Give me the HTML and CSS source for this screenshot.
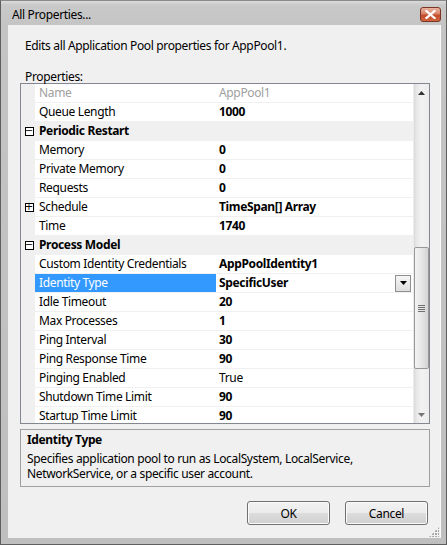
FILE: index.html
```html
<!DOCTYPE html>
<html>
<head>
<meta charset="utf-8">
<link rel="stylesheet" href="styles.css">
</head>
<body>
<div class="window">
  <div class="titlebar">
    <span class="title">All Properties...</span>
    <span class="close"><svg width="11" height="9" viewBox="0 0 11 9"><path d="M1.5 1 L9.5 8 M9.5 1 L1.5 8" stroke="#fff" stroke-width="2.2" stroke-linecap="square"/></svg></span>
  </div>
  <div class="client">
    <div class="intro">Edits all Application Pool properties for AppPool1.</div>
    <div class="label">Properties:</div>
    <div class="grid">
      <div class="rows">
        <div class="row dim"><span class="gut"></span><span class="name">Name</span><span class="val">AppPool1</span></div>
        <div class="row"><span class="gut"></span><span class="name">Queue Length</span><span class="val b">1000</span></div>
        <div class="row cat"><span class="gut"><i class="box">−</i></span><span class="name">Periodic Restart</span><span class="val"></span></div>
        <div class="row"><span class="gut"></span><span class="name">Memory</span><span class="val b">0</span></div>
        <div class="row"><span class="gut"></span><span class="name">Private Memory</span><span class="val b">0</span></div>
        <div class="row"><span class="gut"></span><span class="name">Requests</span><span class="val b">0</span></div>
        <div class="row"><span class="gut"><i class="box">+</i></span><span class="name">Schedule</span><span class="val b">TimeSpan[] Array</span></div>
        <div class="row"><span class="gut"></span><span class="name">Time</span><span class="val b">1740</span></div>
        <div class="row cat"><span class="gut"><i class="box">−</i></span><span class="name">Process Model</span><span class="val"></span></div>
        <div class="row"><span class="gut"></span><span class="name">Custom Identity Credentials</span><span class="val b">AppPoolIdentity1</span></div>
        <div class="row sel"><span class="gut"></span><span class="name">Identity Type</span><span class="val b">SpecificUser<span class="dd"><svg width="7" height="4" viewBox="0 0 7 4"><path d="M0 0H7L3.5 4Z" fill="#000"/></svg></span></span></div>
        <div class="row"><span class="gut"></span><span class="name">Idle Timeout</span><span class="val b">20</span></div>
        <div class="row"><span class="gut"></span><span class="name">Max Processes</span><span class="val b">1</span></div>
        <div class="row"><span class="gut"></span><span class="name">Ping Interval</span><span class="val b">30</span></div>
        <div class="row"><span class="gut"></span><span class="name">Ping Response Time</span><span class="val b">90</span></div>
        <div class="row"><span class="gut"></span><span class="name">Pinging Enabled</span><span class="val">True</span></div>
        <div class="row"><span class="gut"></span><span class="name">Shutdown Time Limit</span><span class="val b">90</span></div>
        <div class="row"><span class="gut"></span><span class="name">Startup Time Limit</span><span class="val b">90</span></div>
      </div>
      <div class="scroll">
        <div class="arrow"><svg width="7" height="4" viewBox="0 0 7 4"><path d="M0 4H7L3.5 0Z" fill="#333"/></svg></div>
        <div class="track">
          <div class="thumb"><span class="grip"></span></div>
        </div>
        <div class="arrow"><svg width="7" height="4" viewBox="0 0 7 4"><path d="M0 0H7L3.5 4Z" fill="#777"/></svg></div>
      </div>
    </div>
    <div class="help">
      <div class="help-title">Identity Type</div>
      <div class="help-text">Specifies application pool to run as LocalSystem, LocalService, NetworkService, or a specific user account.</div>
    </div>
    <div class="buttons">
      <button class="btn">OK</button>
      <button class="btn">Cancel</button>
    </div>
    <span class="sizegrip"></span>
  </div>
</div>
</body>
</html>
```

FILE: styles.css
```css
* { box-sizing: border-box; }
html, body { margin: 0; padding: 0; }
body {
  width: 447px;
  height: 545px;
  overflow: hidden;
  font-family: "Noto Sans", "Open Sans", sans-serif;
  font-size: 12px;
  letter-spacing: -0.35px;
  color: #000;
  background: #c0c0c0;
}
.window {
  width: 447px;
  height: 545px;
  display: flex;
  flex-direction: column;
  background: linear-gradient(#dcdcdc 0, #c9c9c9 4px, #c4c4c4 25px, #bfbfbf 100%);
  border: 1px solid #5f5f5f;
  border-top-color: #8a8a8a;
}
.titlebar {
  height: 24px;
  flex: none;
  display: flex;
  justify-content: space-between;
  padding: 0 5px 0 11px;
}
.title {
  line-height: 16px;
  margin-top: 6px;
  color: #000;
}
.close {
  margin-top: 6px;
  width: 21px;
  height: 15px;
  border: 1px solid #7b3524;
  border-radius: 3px;
  background: linear-gradient(#eab4a0 0, #d98366 45%, #c4492c 55%, #d0673f 100%);
  display: flex;
  align-items: center;
  justify-content: center;
}
.client {
  position: relative;
  flex: 1;
  margin: 0 5px 6px 7px;
  background: #f0f0f0;
  padding: 13px 10px 0 12px;
  border-right: 1px solid #fafafa;
}
.intro {
  line-height: 16px;
  padding-left: 5px;
}
.label {
  line-height: 16px;
  margin-top: 15px;
  padding-left: 5px;
}
.grid {
  margin-top: -2px;
  height: 341px;
  border: 1px solid #828790;
  background: #fff;
  display: flex;
}
.rows {
  flex: 1;
  overflow: hidden;
}
.row {
  display: grid;
  grid-template-columns: 14px 181px 1fr;
  height: 19px;
  line-height: 14px;
}
.row > span { border-bottom: 1px solid #f0f0f0; white-space: nowrap; }
.gut {
  background: #f0f0f0;
  display: flex;
  align-items: center;
  justify-content: center;
  padding-left: 2px;
}
.box {
  width: 9px;
  height: 9px;
  border: 1px solid #000;
  font-style: normal;
  font-size: 10px;
  line-height: 6px;
  letter-spacing: 0;
  text-align: center;
  font-family: "DejaVu Sans", sans-serif;
  display: flex;
  align-items: center;
  justify-content: center;
  background: #fff;
}
.name {
  padding-left: 4px;
  display: flex;
  align-items: center;
}
.val {
  padding-left: 3px;
  display: flex;
  justify-content: space-between;
  align-items: center;
}
.b { font-weight: bold; }
.dim .name, .dim .val { color: #a0a0a0; }
.cat { background: #f0f0f0; }
.cat .name { font-weight: bold; }
.sel .name { background: #3399ff; color: #fff; }
.dd {
  width: 16px;
  height: 17px;
  margin-right: 2px;
  border: 1px solid #8f8f8f;
  background: linear-gradient(#f6f6f6, #dedede);
  display: flex;
  align-items: center;
  justify-content: center;
}
.scroll {
  width: 16px;
  flex: none;
  display: flex;
  flex-direction: column;
  background: linear-gradient(to right, #d8d8d8 0, #e6e6e6 2px, #f2f2f2 50%, #ececec 100%);
  border-left: 1px solid #ececec;
}
.arrow {
  height: 17px;
  flex: none;
  display: flex;
  align-items: center;
  justify-content: center;
}
.track { flex: 1; }
.thumb {
  margin-top: 146px;
  height: 122px;
  border: 1px solid #979797;
  border-radius: 2px;
  background: linear-gradient(to right, #f4f4f4, #e6e6e6 50%, #d4d4d4);
  display: flex;
  align-items: center;
  justify-content: center;
}
.grip {
  width: 7px;
  height: 7px;
  background: repeating-linear-gradient(#6f6f6f 0, #6f6f6f 1px, transparent 1px, transparent 2px);
}
.help {
  margin-top: 5px;
  height: 58px;
  border: 1px solid #a0a0a0;
  padding: 2px 5px 0 6px;
}
.help-title {
  font-weight: bold;
  line-height: 16px;
}
.help-text {
  line-height: 15px;
  margin-top: 3px;
}
.buttons {
  display: flex;
  justify-content: flex-end;
  gap: 15px;
  margin-top: 14px;
  padding-right: 2px;
}
.btn {
  width: 83px;
  height: 24px;
  font-family: inherit;
  font-size: 12px;
  letter-spacing: -0.35px;
  color: #000;
  border: 1px solid #707070;
  border-radius: 3px;
  background: linear-gradient(#f2f2f2 0, #ebebeb 50%, #dddddd 50%, #cfcfcf 100%);
  box-shadow: inset 0 0 0 1px #fbfbfb;
  padding: 0;
}
.sizegrip {
  position: absolute;
  right: 1px;
  bottom: 1px;
  width: 10px;
  height: 10px;
  background:
    radial-gradient(circle at 1px 1px, #a8a8a8 1px, transparent 1.2px) 0 0 / 3px 3px;
  clip-path: polygon(100% 0, 100% 100%, 0 100%);
}
```
